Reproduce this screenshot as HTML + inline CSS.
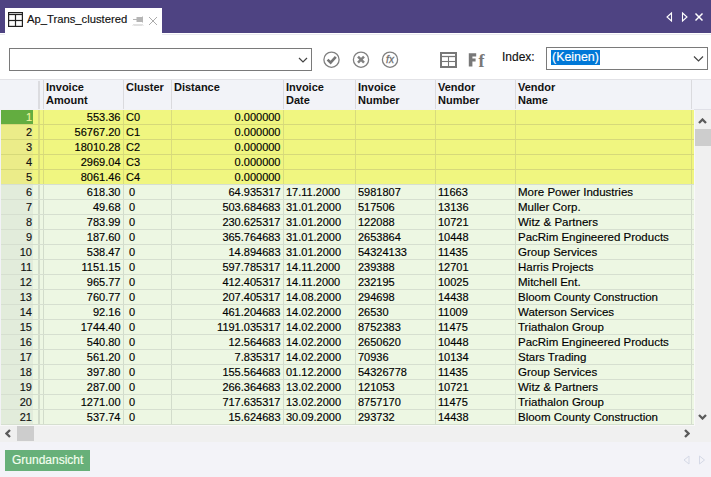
<!DOCTYPE html>
<html><head><meta charset="utf-8"><style>
*{margin:0;padding:0;box-sizing:border-box}
html,body{width:711px;height:477px;overflow:hidden;background:#fff;font-family:"Liberation Sans",sans-serif;font-size:11px;color:#000}
.a{position:absolute}
.t{position:absolute;white-space:nowrap;line-height:14px;-webkit-text-stroke:0.15px currentColor}
</style></head><body>

<div class="a" style="left:0;top:0;width:711px;height:33px;background:#4E4382"></div>
<div class="a" style="left:0;top:34px;width:711px;height:1px;background:#EAEAEE"></div>
<div class="a" style="left:5px;top:8px;width:157px;height:27px;background:#fff"></div>
<svg class="a" style="left:8px;top:12px" width="15" height="15" viewBox="0 0 15 15"><g fill="none" stroke="#222" stroke-width="1.2"><rect x="0.6" y="0.6" width="13.8" height="13.8"/><line x1="0" y1="2.5" x2="15" y2="2.5"/><line x1="0" y1="8.5" x2="15" y2="8.5"/><line x1="7.5" y1="2.5" x2="7.5" y2="15"/></g></svg>
<div class="t" style="left:27px;top:12px;color:#111;font-size:11.25px">Ap_Trans_clustered</div>
<svg class="a" style="left:132px;top:16px" width="13" height="11" viewBox="0 0 13 11"><g fill="none" stroke="#B5B5B5" stroke-width="1"><line x1="1" y1="3.5" x2="5" y2="3.5"/><rect x="5" y="1.5" width="5" height="4" fill="#B5B5B5"/><line x1="10.5" y1="0.5" x2="10.5" y2="6.5"/><path d="M1 9.5 l1 -1 l1 1 l1 -1 l1 1 l1 -1 l1 1 l1 -1 l1 1 l1 -1 l1 1" stroke-width="0.9"/></g></svg>
<svg class="a" style="left:149px;top:17px" width="8" height="8" viewBox="0 0 8 8"><g stroke="#ABABAB" stroke-width="1"><line x1="0" y1="0" x2="8" y2="8"/><line x1="8" y1="0" x2="0" y2="8"/></g></svg>
<svg class="a" style="left:664px;top:11px" width="44" height="12" viewBox="0 0 44 12"><g fill="none" stroke="#fff" stroke-width="1.1"><path d="M7.5 2 L3 6 L7.5 10 Z"/><path d="M18.5 2 L23 6 L18.5 10 Z"/></g><g stroke="#fff" stroke-width="1.5"><line x1="31.5" y1="2.5" x2="38.5" y2="9.5"/><line x1="38.5" y1="2.5" x2="31.5" y2="9.5"/></g></svg>
<div class="a" style="left:9px;top:48px;width:303px;height:23px;border:1px solid #7A7A7A;background:#fff"></div>
<svg class="a" style="left:298px;top:57px" width="10" height="7" viewBox="0 0 10 7"><path d="M1 1 L5 5 L9 1" fill="none" stroke="#444" stroke-width="1.2"/></svg>
<svg class="a" style="left:322px;top:51px" width="80" height="18" viewBox="0 0 80 18"><g fill="none" stroke="#808080" stroke-width="1.3"><circle cx="9.5" cy="8.7" r="7.6"/><circle cx="39" cy="8.7" r="7.6"/><circle cx="68" cy="8.7" r="7.6"/></g><path d="M5.6 8.6 L8.6 11.6 L13.8 5.8" fill="none" stroke="#757575" stroke-width="2.6"/><g stroke="#808080" stroke-width="2.4"><line x1="36" y1="5.7" x2="42" y2="11.7"/><line x1="42" y1="5.7" x2="36" y2="11.7"/></g><text x="68" y="12.3" text-anchor="middle" font-family="Liberation Sans" font-style="italic" font-size="10" fill="#707070" stroke="#707070" stroke-width="0.3">fx</text></svg>
<svg class="a" style="left:440px;top:52px" width="17" height="16" viewBox="0 0 17 16"><g fill="none" stroke="#777"><rect x="1" y="1" width="15" height="14" stroke-width="2"/><line x1="0" y1="4.5" x2="17" y2="4.5" stroke-width="1.3"/><line x1="0" y1="9.5" x2="17" y2="9.5" stroke-width="1.1"/><line x1="8.5" y1="4.5" x2="8.5" y2="16" stroke-width="1.1"/></g></svg>
<svg class="a" style="left:468px;top:52px" width="20" height="16" viewBox="0 0 20 16"><path d="M0.8 1.2 H8.2 V4.4 H4.4 V6.6 H7.6 V9.4 H4.4 V14.6 H0.8 Z" fill="#787878"/><text x="10.6" y="14.6" font-family="Liberation Serif" font-weight="bold" font-size="18" fill="#787878">f</text></svg>
<div class="t" style="left:502px;top:50px;color:#111;font-size:12px">Index:</div>
<div class="a" style="left:546px;top:47px;width:162px;height:23px;border:1px solid #7A7A7A;background:#fff"></div>
<div class="a" style="left:551px;top:50px;width:49px;height:15px;background:#0078D7"></div>
<div class="t" style="left:552px;top:50px;color:#fff;font-size:12.4px">(Keinen)</div>
<svg class="a" style="left:693px;top:55px" width="11" height="8" viewBox="0 0 11 8"><path d="M1 1.5 L5.5 6 L10 1.5" fill="none" stroke="#444" stroke-width="1.2"/></svg>
<div class="a" style="left:0;top:79px;width:711px;height:31px;background:#F2F3F8;border-top:1px solid #E2E2E6;border-bottom:1px solid #E0E0E8"></div>
<div class="a" style="left:38px;top:81px;width:2px;height:28px;background:#DCDCE0"></div>
<div class="a" style="left:43px;top:80px;width:1px;height:29px;background:#D8D8DC"></div>
<div class="a" style="left:123px;top:80px;width:1px;height:29px;background:#DADADE"></div>
<div class="t" style="left:46px;top:81px;font-weight:bold;line-height:13px;color:#111;-webkit-text-stroke:0">Invoice<br>Amount</div>
<div class="a" style="left:171px;top:80px;width:1px;height:29px;background:#DADADE"></div>
<div class="t" style="left:126px;top:81px;font-weight:bold;line-height:13px;color:#111;-webkit-text-stroke:0">Cluster<br></div>
<div class="a" style="left:283px;top:80px;width:1px;height:29px;background:#DADADE"></div>
<div class="t" style="left:174px;top:81px;font-weight:bold;line-height:13px;color:#111;-webkit-text-stroke:0">Distance<br></div>
<div class="a" style="left:355px;top:80px;width:1px;height:29px;background:#DADADE"></div>
<div class="t" style="left:286px;top:81px;font-weight:bold;line-height:13px;color:#111;-webkit-text-stroke:0">Invoice<br>Date</div>
<div class="a" style="left:435px;top:80px;width:1px;height:29px;background:#DADADE"></div>
<div class="t" style="left:358px;top:81px;font-weight:bold;line-height:13px;color:#111;-webkit-text-stroke:0">Invoice<br>Number</div>
<div class="a" style="left:515px;top:80px;width:1px;height:29px;background:#DADADE"></div>
<div class="t" style="left:438px;top:81px;font-weight:bold;line-height:13px;color:#111;-webkit-text-stroke:0">Vendor<br>Number</div>
<div class="a" style="left:691px;top:80px;width:1px;height:29px;background:#DADADE"></div>
<div class="t" style="left:518px;top:81px;font-weight:bold;line-height:13px;color:#111;-webkit-text-stroke:0">Vendor<br>Name</div>
<div class="a" style="left:0;top:109px;width:694px;height:316px;background:#F2F2F6"></div>
<div class="a" style="left:1px;top:110px;width:693px;height:14px;background:#F0F680"></div>
<div class="a" style="left:1px;top:110px;width:32px;height:14px;background:#63AD40"></div>
<div class="a" style="left:1px;top:124px;width:693px;height:1px;background:#D6D97A"></div>
<div class="a" style="left:38px;top:110px;width:2px;height:14px;background:#D9DC7C"></div>
<div class="a" style="left:43px;top:110px;width:1px;height:14px;background:#D9DC7C"></div>
<div class="a" style="left:123px;top:110px;width:1px;height:14px;background:#D9DC7C"></div>
<div class="a" style="left:171px;top:110px;width:1px;height:14px;background:#D9DC7C"></div>
<div class="a" style="left:283px;top:110px;width:1px;height:14px;background:#D9DC7C"></div>
<div class="a" style="left:355px;top:110px;width:1px;height:14px;background:#D9DC7C"></div>
<div class="a" style="left:435px;top:110px;width:1px;height:14px;background:#D9DC7C"></div>
<div class="a" style="left:515px;top:110px;width:1px;height:14px;background:#D9DC7C"></div>
<div class="a" style="left:691px;top:110px;width:1px;height:14px;background:#D9DC7C"></div>
<div class="t" style="left:1px;top:110px;width:31px;text-align:right;color:#EEF5A0">1</div>
<div class="t" style="left:44px;top:110px;width:76.5px;text-align:right">553.36</div>
<div class="t" style="left:126px;top:110px;">C0</div>
<div class="t" style="left:172px;top:110px;width:108.5px;text-align:right">0.000000</div>
<div class="t" style="left:286px;top:110px;"></div>
<div class="t" style="left:358px;top:110px;"></div>
<div class="t" style="left:438px;top:110px;"></div>
<div class="t" style="left:518px;top:110px;font-size:11.5px;"></div>
<div class="a" style="left:1px;top:125px;width:693px;height:14px;background:#F0F680"></div>
<div class="a" style="left:1px;top:125px;width:32px;height:14px;background:#EBEC89"></div>
<div class="a" style="left:1px;top:139px;width:693px;height:1px;background:#D6D97A"></div>
<div class="a" style="left:38px;top:125px;width:2px;height:14px;background:#D9DC7C"></div>
<div class="a" style="left:43px;top:125px;width:1px;height:14px;background:#D9DC7C"></div>
<div class="a" style="left:123px;top:125px;width:1px;height:14px;background:#D9DC7C"></div>
<div class="a" style="left:171px;top:125px;width:1px;height:14px;background:#D9DC7C"></div>
<div class="a" style="left:283px;top:125px;width:1px;height:14px;background:#D9DC7C"></div>
<div class="a" style="left:355px;top:125px;width:1px;height:14px;background:#D9DC7C"></div>
<div class="a" style="left:435px;top:125px;width:1px;height:14px;background:#D9DC7C"></div>
<div class="a" style="left:515px;top:125px;width:1px;height:14px;background:#D9DC7C"></div>
<div class="a" style="left:691px;top:125px;width:1px;height:14px;background:#D9DC7C"></div>
<div class="t" style="left:1px;top:125px;width:31px;text-align:right;color:#111">2</div>
<div class="t" style="left:44px;top:125px;width:76.5px;text-align:right">56767.20</div>
<div class="t" style="left:126px;top:125px;">C1</div>
<div class="t" style="left:172px;top:125px;width:108.5px;text-align:right">0.000000</div>
<div class="t" style="left:286px;top:125px;"></div>
<div class="t" style="left:358px;top:125px;"></div>
<div class="t" style="left:438px;top:125px;"></div>
<div class="t" style="left:518px;top:125px;font-size:11.5px;"></div>
<div class="a" style="left:1px;top:140px;width:693px;height:14px;background:#F0F680"></div>
<div class="a" style="left:1px;top:140px;width:32px;height:14px;background:#EBEC89"></div>
<div class="a" style="left:1px;top:154px;width:693px;height:1px;background:#D6D97A"></div>
<div class="a" style="left:38px;top:140px;width:2px;height:14px;background:#D9DC7C"></div>
<div class="a" style="left:43px;top:140px;width:1px;height:14px;background:#D9DC7C"></div>
<div class="a" style="left:123px;top:140px;width:1px;height:14px;background:#D9DC7C"></div>
<div class="a" style="left:171px;top:140px;width:1px;height:14px;background:#D9DC7C"></div>
<div class="a" style="left:283px;top:140px;width:1px;height:14px;background:#D9DC7C"></div>
<div class="a" style="left:355px;top:140px;width:1px;height:14px;background:#D9DC7C"></div>
<div class="a" style="left:435px;top:140px;width:1px;height:14px;background:#D9DC7C"></div>
<div class="a" style="left:515px;top:140px;width:1px;height:14px;background:#D9DC7C"></div>
<div class="a" style="left:691px;top:140px;width:1px;height:14px;background:#D9DC7C"></div>
<div class="t" style="left:1px;top:140px;width:31px;text-align:right;color:#111">3</div>
<div class="t" style="left:44px;top:140px;width:76.5px;text-align:right">18010.28</div>
<div class="t" style="left:126px;top:140px;">C2</div>
<div class="t" style="left:172px;top:140px;width:108.5px;text-align:right">0.000000</div>
<div class="t" style="left:286px;top:140px;"></div>
<div class="t" style="left:358px;top:140px;"></div>
<div class="t" style="left:438px;top:140px;"></div>
<div class="t" style="left:518px;top:140px;font-size:11.5px;"></div>
<div class="a" style="left:1px;top:155px;width:693px;height:14px;background:#F0F680"></div>
<div class="a" style="left:1px;top:155px;width:32px;height:14px;background:#EBEC89"></div>
<div class="a" style="left:1px;top:169px;width:693px;height:1px;background:#D6D97A"></div>
<div class="a" style="left:38px;top:155px;width:2px;height:14px;background:#D9DC7C"></div>
<div class="a" style="left:43px;top:155px;width:1px;height:14px;background:#D9DC7C"></div>
<div class="a" style="left:123px;top:155px;width:1px;height:14px;background:#D9DC7C"></div>
<div class="a" style="left:171px;top:155px;width:1px;height:14px;background:#D9DC7C"></div>
<div class="a" style="left:283px;top:155px;width:1px;height:14px;background:#D9DC7C"></div>
<div class="a" style="left:355px;top:155px;width:1px;height:14px;background:#D9DC7C"></div>
<div class="a" style="left:435px;top:155px;width:1px;height:14px;background:#D9DC7C"></div>
<div class="a" style="left:515px;top:155px;width:1px;height:14px;background:#D9DC7C"></div>
<div class="a" style="left:691px;top:155px;width:1px;height:14px;background:#D9DC7C"></div>
<div class="t" style="left:1px;top:155px;width:31px;text-align:right;color:#111">4</div>
<div class="t" style="left:44px;top:155px;width:76.5px;text-align:right">2969.04</div>
<div class="t" style="left:126px;top:155px;">C3</div>
<div class="t" style="left:172px;top:155px;width:108.5px;text-align:right">0.000000</div>
<div class="t" style="left:286px;top:155px;"></div>
<div class="t" style="left:358px;top:155px;"></div>
<div class="t" style="left:438px;top:155px;"></div>
<div class="t" style="left:518px;top:155px;font-size:11.5px;"></div>
<div class="a" style="left:1px;top:170px;width:693px;height:14px;background:#F0F680"></div>
<div class="a" style="left:1px;top:170px;width:32px;height:14px;background:#EBEC89"></div>
<div class="a" style="left:1px;top:184px;width:693px;height:1px;background:#D6DFD0"></div>
<div class="a" style="left:38px;top:170px;width:2px;height:14px;background:#D9DC7C"></div>
<div class="a" style="left:43px;top:170px;width:1px;height:14px;background:#D9DC7C"></div>
<div class="a" style="left:123px;top:170px;width:1px;height:14px;background:#D9DC7C"></div>
<div class="a" style="left:171px;top:170px;width:1px;height:14px;background:#D9DC7C"></div>
<div class="a" style="left:283px;top:170px;width:1px;height:14px;background:#D9DC7C"></div>
<div class="a" style="left:355px;top:170px;width:1px;height:14px;background:#D9DC7C"></div>
<div class="a" style="left:435px;top:170px;width:1px;height:14px;background:#D9DC7C"></div>
<div class="a" style="left:515px;top:170px;width:1px;height:14px;background:#D9DC7C"></div>
<div class="a" style="left:691px;top:170px;width:1px;height:14px;background:#D9DC7C"></div>
<div class="t" style="left:1px;top:170px;width:31px;text-align:right;color:#111">5</div>
<div class="t" style="left:44px;top:170px;width:76.5px;text-align:right">8061.46</div>
<div class="t" style="left:126px;top:170px;">C4</div>
<div class="t" style="left:172px;top:170px;width:108.5px;text-align:right">0.000000</div>
<div class="t" style="left:286px;top:170px;"></div>
<div class="t" style="left:358px;top:170px;"></div>
<div class="t" style="left:438px;top:170px;"></div>
<div class="t" style="left:518px;top:170px;font-size:11.5px;"></div>
<div class="a" style="left:1px;top:185px;width:693px;height:14px;background:#EDF7E3"></div>
<div class="a" style="left:1px;top:185px;width:32px;height:14px;background:#E2ECDB"></div>
<div class="a" style="left:1px;top:199px;width:693px;height:1px;background:#D6DFD0"></div>
<div class="a" style="left:38px;top:185px;width:2px;height:14px;background:#D2DCCB"></div>
<div class="a" style="left:43px;top:185px;width:1px;height:14px;background:#D2DCCB"></div>
<div class="a" style="left:123px;top:185px;width:1px;height:14px;background:#D2DCCB"></div>
<div class="a" style="left:171px;top:185px;width:1px;height:14px;background:#D2DCCB"></div>
<div class="a" style="left:283px;top:185px;width:1px;height:14px;background:#D2DCCB"></div>
<div class="a" style="left:355px;top:185px;width:1px;height:14px;background:#D2DCCB"></div>
<div class="a" style="left:435px;top:185px;width:1px;height:14px;background:#D2DCCB"></div>
<div class="a" style="left:515px;top:185px;width:1px;height:14px;background:#D2DCCB"></div>
<div class="a" style="left:691px;top:185px;width:1px;height:14px;background:#D2DCCB"></div>
<div class="t" style="left:1px;top:185px;width:31px;text-align:right;color:#111">6</div>
<div class="t" style="left:44px;top:185px;width:76.5px;text-align:right">618.30</div>
<div class="t" style="left:129px;top:185px;">0</div>
<div class="t" style="left:172px;top:185px;width:108.5px;text-align:right">64.935317</div>
<div class="t" style="left:286px;top:185px;">17.11.2000</div>
<div class="t" style="left:358px;top:185px;">5981807</div>
<div class="t" style="left:438px;top:185px;">11663</div>
<div class="t" style="left:518px;top:185px;font-size:11.5px;">More Power Industries</div>
<div class="a" style="left:1px;top:200px;width:693px;height:14px;background:#EDF7E3"></div>
<div class="a" style="left:1px;top:200px;width:32px;height:14px;background:#E2ECDB"></div>
<div class="a" style="left:1px;top:214px;width:693px;height:1px;background:#D6DFD0"></div>
<div class="a" style="left:38px;top:200px;width:2px;height:14px;background:#D2DCCB"></div>
<div class="a" style="left:43px;top:200px;width:1px;height:14px;background:#D2DCCB"></div>
<div class="a" style="left:123px;top:200px;width:1px;height:14px;background:#D2DCCB"></div>
<div class="a" style="left:171px;top:200px;width:1px;height:14px;background:#D2DCCB"></div>
<div class="a" style="left:283px;top:200px;width:1px;height:14px;background:#D2DCCB"></div>
<div class="a" style="left:355px;top:200px;width:1px;height:14px;background:#D2DCCB"></div>
<div class="a" style="left:435px;top:200px;width:1px;height:14px;background:#D2DCCB"></div>
<div class="a" style="left:515px;top:200px;width:1px;height:14px;background:#D2DCCB"></div>
<div class="a" style="left:691px;top:200px;width:1px;height:14px;background:#D2DCCB"></div>
<div class="t" style="left:1px;top:200px;width:31px;text-align:right;color:#111">7</div>
<div class="t" style="left:44px;top:200px;width:76.5px;text-align:right">49.68</div>
<div class="t" style="left:129px;top:200px;">0</div>
<div class="t" style="left:172px;top:200px;width:108.5px;text-align:right">503.684683</div>
<div class="t" style="left:286px;top:200px;">31.01.2000</div>
<div class="t" style="left:358px;top:200px;">517506</div>
<div class="t" style="left:438px;top:200px;">13136</div>
<div class="t" style="left:518px;top:200px;font-size:11.5px;">Muller Corp.</div>
<div class="a" style="left:1px;top:215px;width:693px;height:14px;background:#EDF7E3"></div>
<div class="a" style="left:1px;top:215px;width:32px;height:14px;background:#E2ECDB"></div>
<div class="a" style="left:1px;top:229px;width:693px;height:1px;background:#D6DFD0"></div>
<div class="a" style="left:38px;top:215px;width:2px;height:14px;background:#D2DCCB"></div>
<div class="a" style="left:43px;top:215px;width:1px;height:14px;background:#D2DCCB"></div>
<div class="a" style="left:123px;top:215px;width:1px;height:14px;background:#D2DCCB"></div>
<div class="a" style="left:171px;top:215px;width:1px;height:14px;background:#D2DCCB"></div>
<div class="a" style="left:283px;top:215px;width:1px;height:14px;background:#D2DCCB"></div>
<div class="a" style="left:355px;top:215px;width:1px;height:14px;background:#D2DCCB"></div>
<div class="a" style="left:435px;top:215px;width:1px;height:14px;background:#D2DCCB"></div>
<div class="a" style="left:515px;top:215px;width:1px;height:14px;background:#D2DCCB"></div>
<div class="a" style="left:691px;top:215px;width:1px;height:14px;background:#D2DCCB"></div>
<div class="t" style="left:1px;top:215px;width:31px;text-align:right;color:#111">8</div>
<div class="t" style="left:44px;top:215px;width:76.5px;text-align:right">783.99</div>
<div class="t" style="left:129px;top:215px;">0</div>
<div class="t" style="left:172px;top:215px;width:108.5px;text-align:right">230.625317</div>
<div class="t" style="left:286px;top:215px;">31.01.2000</div>
<div class="t" style="left:358px;top:215px;">122088</div>
<div class="t" style="left:438px;top:215px;">10721</div>
<div class="t" style="left:518px;top:215px;font-size:11.5px;">Witz &amp; Partners</div>
<div class="a" style="left:1px;top:230px;width:693px;height:14px;background:#EDF7E3"></div>
<div class="a" style="left:1px;top:230px;width:32px;height:14px;background:#E2ECDB"></div>
<div class="a" style="left:1px;top:244px;width:693px;height:1px;background:#D6DFD0"></div>
<div class="a" style="left:38px;top:230px;width:2px;height:14px;background:#D2DCCB"></div>
<div class="a" style="left:43px;top:230px;width:1px;height:14px;background:#D2DCCB"></div>
<div class="a" style="left:123px;top:230px;width:1px;height:14px;background:#D2DCCB"></div>
<div class="a" style="left:171px;top:230px;width:1px;height:14px;background:#D2DCCB"></div>
<div class="a" style="left:283px;top:230px;width:1px;height:14px;background:#D2DCCB"></div>
<div class="a" style="left:355px;top:230px;width:1px;height:14px;background:#D2DCCB"></div>
<div class="a" style="left:435px;top:230px;width:1px;height:14px;background:#D2DCCB"></div>
<div class="a" style="left:515px;top:230px;width:1px;height:14px;background:#D2DCCB"></div>
<div class="a" style="left:691px;top:230px;width:1px;height:14px;background:#D2DCCB"></div>
<div class="t" style="left:1px;top:230px;width:31px;text-align:right;color:#111">9</div>
<div class="t" style="left:44px;top:230px;width:76.5px;text-align:right">187.60</div>
<div class="t" style="left:129px;top:230px;">0</div>
<div class="t" style="left:172px;top:230px;width:108.5px;text-align:right">365.764683</div>
<div class="t" style="left:286px;top:230px;">31.01.2000</div>
<div class="t" style="left:358px;top:230px;">2653864</div>
<div class="t" style="left:438px;top:230px;">10448</div>
<div class="t" style="left:518px;top:230px;font-size:11.5px;">PacRim Engineered Products</div>
<div class="a" style="left:1px;top:245px;width:693px;height:14px;background:#EDF7E3"></div>
<div class="a" style="left:1px;top:245px;width:32px;height:14px;background:#E2ECDB"></div>
<div class="a" style="left:1px;top:259px;width:693px;height:1px;background:#D6DFD0"></div>
<div class="a" style="left:38px;top:245px;width:2px;height:14px;background:#D2DCCB"></div>
<div class="a" style="left:43px;top:245px;width:1px;height:14px;background:#D2DCCB"></div>
<div class="a" style="left:123px;top:245px;width:1px;height:14px;background:#D2DCCB"></div>
<div class="a" style="left:171px;top:245px;width:1px;height:14px;background:#D2DCCB"></div>
<div class="a" style="left:283px;top:245px;width:1px;height:14px;background:#D2DCCB"></div>
<div class="a" style="left:355px;top:245px;width:1px;height:14px;background:#D2DCCB"></div>
<div class="a" style="left:435px;top:245px;width:1px;height:14px;background:#D2DCCB"></div>
<div class="a" style="left:515px;top:245px;width:1px;height:14px;background:#D2DCCB"></div>
<div class="a" style="left:691px;top:245px;width:1px;height:14px;background:#D2DCCB"></div>
<div class="t" style="left:1px;top:245px;width:31px;text-align:right;color:#111">10</div>
<div class="t" style="left:44px;top:245px;width:76.5px;text-align:right">538.47</div>
<div class="t" style="left:129px;top:245px;">0</div>
<div class="t" style="left:172px;top:245px;width:108.5px;text-align:right">14.894683</div>
<div class="t" style="left:286px;top:245px;">31.01.2000</div>
<div class="t" style="left:358px;top:245px;">54324133</div>
<div class="t" style="left:438px;top:245px;">11435</div>
<div class="t" style="left:518px;top:245px;font-size:11.5px;">Group Services</div>
<div class="a" style="left:1px;top:260px;width:693px;height:14px;background:#EDF7E3"></div>
<div class="a" style="left:1px;top:260px;width:32px;height:14px;background:#E2ECDB"></div>
<div class="a" style="left:1px;top:274px;width:693px;height:1px;background:#D6DFD0"></div>
<div class="a" style="left:38px;top:260px;width:2px;height:14px;background:#D2DCCB"></div>
<div class="a" style="left:43px;top:260px;width:1px;height:14px;background:#D2DCCB"></div>
<div class="a" style="left:123px;top:260px;width:1px;height:14px;background:#D2DCCB"></div>
<div class="a" style="left:171px;top:260px;width:1px;height:14px;background:#D2DCCB"></div>
<div class="a" style="left:283px;top:260px;width:1px;height:14px;background:#D2DCCB"></div>
<div class="a" style="left:355px;top:260px;width:1px;height:14px;background:#D2DCCB"></div>
<div class="a" style="left:435px;top:260px;width:1px;height:14px;background:#D2DCCB"></div>
<div class="a" style="left:515px;top:260px;width:1px;height:14px;background:#D2DCCB"></div>
<div class="a" style="left:691px;top:260px;width:1px;height:14px;background:#D2DCCB"></div>
<div class="t" style="left:1px;top:260px;width:31px;text-align:right;color:#111">11</div>
<div class="t" style="left:44px;top:260px;width:76.5px;text-align:right">1151.15</div>
<div class="t" style="left:129px;top:260px;">0</div>
<div class="t" style="left:172px;top:260px;width:108.5px;text-align:right">597.785317</div>
<div class="t" style="left:286px;top:260px;">14.11.2000</div>
<div class="t" style="left:358px;top:260px;">239388</div>
<div class="t" style="left:438px;top:260px;">12701</div>
<div class="t" style="left:518px;top:260px;font-size:11.5px;">Harris Projects</div>
<div class="a" style="left:1px;top:275px;width:693px;height:14px;background:#EDF7E3"></div>
<div class="a" style="left:1px;top:275px;width:32px;height:14px;background:#E2ECDB"></div>
<div class="a" style="left:1px;top:289px;width:693px;height:1px;background:#D6DFD0"></div>
<div class="a" style="left:38px;top:275px;width:2px;height:14px;background:#D2DCCB"></div>
<div class="a" style="left:43px;top:275px;width:1px;height:14px;background:#D2DCCB"></div>
<div class="a" style="left:123px;top:275px;width:1px;height:14px;background:#D2DCCB"></div>
<div class="a" style="left:171px;top:275px;width:1px;height:14px;background:#D2DCCB"></div>
<div class="a" style="left:283px;top:275px;width:1px;height:14px;background:#D2DCCB"></div>
<div class="a" style="left:355px;top:275px;width:1px;height:14px;background:#D2DCCB"></div>
<div class="a" style="left:435px;top:275px;width:1px;height:14px;background:#D2DCCB"></div>
<div class="a" style="left:515px;top:275px;width:1px;height:14px;background:#D2DCCB"></div>
<div class="a" style="left:691px;top:275px;width:1px;height:14px;background:#D2DCCB"></div>
<div class="t" style="left:1px;top:275px;width:31px;text-align:right;color:#111">12</div>
<div class="t" style="left:44px;top:275px;width:76.5px;text-align:right">965.77</div>
<div class="t" style="left:129px;top:275px;">0</div>
<div class="t" style="left:172px;top:275px;width:108.5px;text-align:right">412.405317</div>
<div class="t" style="left:286px;top:275px;">14.11.2000</div>
<div class="t" style="left:358px;top:275px;">232195</div>
<div class="t" style="left:438px;top:275px;">10025</div>
<div class="t" style="left:518px;top:275px;font-size:11.5px;">Mitchell Ent.</div>
<div class="a" style="left:1px;top:290px;width:693px;height:14px;background:#EDF7E3"></div>
<div class="a" style="left:1px;top:290px;width:32px;height:14px;background:#E2ECDB"></div>
<div class="a" style="left:1px;top:304px;width:693px;height:1px;background:#D6DFD0"></div>
<div class="a" style="left:38px;top:290px;width:2px;height:14px;background:#D2DCCB"></div>
<div class="a" style="left:43px;top:290px;width:1px;height:14px;background:#D2DCCB"></div>
<div class="a" style="left:123px;top:290px;width:1px;height:14px;background:#D2DCCB"></div>
<div class="a" style="left:171px;top:290px;width:1px;height:14px;background:#D2DCCB"></div>
<div class="a" style="left:283px;top:290px;width:1px;height:14px;background:#D2DCCB"></div>
<div class="a" style="left:355px;top:290px;width:1px;height:14px;background:#D2DCCB"></div>
<div class="a" style="left:435px;top:290px;width:1px;height:14px;background:#D2DCCB"></div>
<div class="a" style="left:515px;top:290px;width:1px;height:14px;background:#D2DCCB"></div>
<div class="a" style="left:691px;top:290px;width:1px;height:14px;background:#D2DCCB"></div>
<div class="t" style="left:1px;top:290px;width:31px;text-align:right;color:#111">13</div>
<div class="t" style="left:44px;top:290px;width:76.5px;text-align:right">760.77</div>
<div class="t" style="left:129px;top:290px;">0</div>
<div class="t" style="left:172px;top:290px;width:108.5px;text-align:right">207.405317</div>
<div class="t" style="left:286px;top:290px;">14.08.2000</div>
<div class="t" style="left:358px;top:290px;">294698</div>
<div class="t" style="left:438px;top:290px;">14438</div>
<div class="t" style="left:518px;top:290px;font-size:11.5px;">Bloom County Construction</div>
<div class="a" style="left:1px;top:305px;width:693px;height:14px;background:#EDF7E3"></div>
<div class="a" style="left:1px;top:305px;width:32px;height:14px;background:#E2ECDB"></div>
<div class="a" style="left:1px;top:319px;width:693px;height:1px;background:#D6DFD0"></div>
<div class="a" style="left:38px;top:305px;width:2px;height:14px;background:#D2DCCB"></div>
<div class="a" style="left:43px;top:305px;width:1px;height:14px;background:#D2DCCB"></div>
<div class="a" style="left:123px;top:305px;width:1px;height:14px;background:#D2DCCB"></div>
<div class="a" style="left:171px;top:305px;width:1px;height:14px;background:#D2DCCB"></div>
<div class="a" style="left:283px;top:305px;width:1px;height:14px;background:#D2DCCB"></div>
<div class="a" style="left:355px;top:305px;width:1px;height:14px;background:#D2DCCB"></div>
<div class="a" style="left:435px;top:305px;width:1px;height:14px;background:#D2DCCB"></div>
<div class="a" style="left:515px;top:305px;width:1px;height:14px;background:#D2DCCB"></div>
<div class="a" style="left:691px;top:305px;width:1px;height:14px;background:#D2DCCB"></div>
<div class="t" style="left:1px;top:305px;width:31px;text-align:right;color:#111">14</div>
<div class="t" style="left:44px;top:305px;width:76.5px;text-align:right">92.16</div>
<div class="t" style="left:129px;top:305px;">0</div>
<div class="t" style="left:172px;top:305px;width:108.5px;text-align:right">461.204683</div>
<div class="t" style="left:286px;top:305px;">14.02.2000</div>
<div class="t" style="left:358px;top:305px;">26530</div>
<div class="t" style="left:438px;top:305px;">11009</div>
<div class="t" style="left:518px;top:305px;font-size:11.5px;">Waterson Services</div>
<div class="a" style="left:1px;top:320px;width:693px;height:14px;background:#EDF7E3"></div>
<div class="a" style="left:1px;top:320px;width:32px;height:14px;background:#E2ECDB"></div>
<div class="a" style="left:1px;top:334px;width:693px;height:1px;background:#D6DFD0"></div>
<div class="a" style="left:38px;top:320px;width:2px;height:14px;background:#D2DCCB"></div>
<div class="a" style="left:43px;top:320px;width:1px;height:14px;background:#D2DCCB"></div>
<div class="a" style="left:123px;top:320px;width:1px;height:14px;background:#D2DCCB"></div>
<div class="a" style="left:171px;top:320px;width:1px;height:14px;background:#D2DCCB"></div>
<div class="a" style="left:283px;top:320px;width:1px;height:14px;background:#D2DCCB"></div>
<div class="a" style="left:355px;top:320px;width:1px;height:14px;background:#D2DCCB"></div>
<div class="a" style="left:435px;top:320px;width:1px;height:14px;background:#D2DCCB"></div>
<div class="a" style="left:515px;top:320px;width:1px;height:14px;background:#D2DCCB"></div>
<div class="a" style="left:691px;top:320px;width:1px;height:14px;background:#D2DCCB"></div>
<div class="t" style="left:1px;top:320px;width:31px;text-align:right;color:#111">15</div>
<div class="t" style="left:44px;top:320px;width:76.5px;text-align:right">1744.40</div>
<div class="t" style="left:129px;top:320px;">0</div>
<div class="t" style="left:172px;top:320px;width:108.5px;text-align:right">1191.035317</div>
<div class="t" style="left:286px;top:320px;">14.02.2000</div>
<div class="t" style="left:358px;top:320px;">8752383</div>
<div class="t" style="left:438px;top:320px;">11475</div>
<div class="t" style="left:518px;top:320px;font-size:11.5px;">Triathalon Group</div>
<div class="a" style="left:1px;top:335px;width:693px;height:14px;background:#EDF7E3"></div>
<div class="a" style="left:1px;top:335px;width:32px;height:14px;background:#E2ECDB"></div>
<div class="a" style="left:1px;top:349px;width:693px;height:1px;background:#D6DFD0"></div>
<div class="a" style="left:38px;top:335px;width:2px;height:14px;background:#D2DCCB"></div>
<div class="a" style="left:43px;top:335px;width:1px;height:14px;background:#D2DCCB"></div>
<div class="a" style="left:123px;top:335px;width:1px;height:14px;background:#D2DCCB"></div>
<div class="a" style="left:171px;top:335px;width:1px;height:14px;background:#D2DCCB"></div>
<div class="a" style="left:283px;top:335px;width:1px;height:14px;background:#D2DCCB"></div>
<div class="a" style="left:355px;top:335px;width:1px;height:14px;background:#D2DCCB"></div>
<div class="a" style="left:435px;top:335px;width:1px;height:14px;background:#D2DCCB"></div>
<div class="a" style="left:515px;top:335px;width:1px;height:14px;background:#D2DCCB"></div>
<div class="a" style="left:691px;top:335px;width:1px;height:14px;background:#D2DCCB"></div>
<div class="t" style="left:1px;top:335px;width:31px;text-align:right;color:#111">16</div>
<div class="t" style="left:44px;top:335px;width:76.5px;text-align:right">540.80</div>
<div class="t" style="left:129px;top:335px;">0</div>
<div class="t" style="left:172px;top:335px;width:108.5px;text-align:right">12.564683</div>
<div class="t" style="left:286px;top:335px;">14.02.2000</div>
<div class="t" style="left:358px;top:335px;">2650620</div>
<div class="t" style="left:438px;top:335px;">10448</div>
<div class="t" style="left:518px;top:335px;font-size:11.5px;">PacRim Engineered Products</div>
<div class="a" style="left:1px;top:350px;width:693px;height:14px;background:#EDF7E3"></div>
<div class="a" style="left:1px;top:350px;width:32px;height:14px;background:#E2ECDB"></div>
<div class="a" style="left:1px;top:364px;width:693px;height:1px;background:#D6DFD0"></div>
<div class="a" style="left:38px;top:350px;width:2px;height:14px;background:#D2DCCB"></div>
<div class="a" style="left:43px;top:350px;width:1px;height:14px;background:#D2DCCB"></div>
<div class="a" style="left:123px;top:350px;width:1px;height:14px;background:#D2DCCB"></div>
<div class="a" style="left:171px;top:350px;width:1px;height:14px;background:#D2DCCB"></div>
<div class="a" style="left:283px;top:350px;width:1px;height:14px;background:#D2DCCB"></div>
<div class="a" style="left:355px;top:350px;width:1px;height:14px;background:#D2DCCB"></div>
<div class="a" style="left:435px;top:350px;width:1px;height:14px;background:#D2DCCB"></div>
<div class="a" style="left:515px;top:350px;width:1px;height:14px;background:#D2DCCB"></div>
<div class="a" style="left:691px;top:350px;width:1px;height:14px;background:#D2DCCB"></div>
<div class="t" style="left:1px;top:350px;width:31px;text-align:right;color:#111">17</div>
<div class="t" style="left:44px;top:350px;width:76.5px;text-align:right">561.20</div>
<div class="t" style="left:129px;top:350px;">0</div>
<div class="t" style="left:172px;top:350px;width:108.5px;text-align:right">7.835317</div>
<div class="t" style="left:286px;top:350px;">14.02.2000</div>
<div class="t" style="left:358px;top:350px;">70936</div>
<div class="t" style="left:438px;top:350px;">10134</div>
<div class="t" style="left:518px;top:350px;font-size:11.5px;">Stars Trading</div>
<div class="a" style="left:1px;top:365px;width:693px;height:14px;background:#EDF7E3"></div>
<div class="a" style="left:1px;top:365px;width:32px;height:14px;background:#E2ECDB"></div>
<div class="a" style="left:1px;top:379px;width:693px;height:1px;background:#D6DFD0"></div>
<div class="a" style="left:38px;top:365px;width:2px;height:14px;background:#D2DCCB"></div>
<div class="a" style="left:43px;top:365px;width:1px;height:14px;background:#D2DCCB"></div>
<div class="a" style="left:123px;top:365px;width:1px;height:14px;background:#D2DCCB"></div>
<div class="a" style="left:171px;top:365px;width:1px;height:14px;background:#D2DCCB"></div>
<div class="a" style="left:283px;top:365px;width:1px;height:14px;background:#D2DCCB"></div>
<div class="a" style="left:355px;top:365px;width:1px;height:14px;background:#D2DCCB"></div>
<div class="a" style="left:435px;top:365px;width:1px;height:14px;background:#D2DCCB"></div>
<div class="a" style="left:515px;top:365px;width:1px;height:14px;background:#D2DCCB"></div>
<div class="a" style="left:691px;top:365px;width:1px;height:14px;background:#D2DCCB"></div>
<div class="t" style="left:1px;top:365px;width:31px;text-align:right;color:#111">18</div>
<div class="t" style="left:44px;top:365px;width:76.5px;text-align:right">397.80</div>
<div class="t" style="left:129px;top:365px;">0</div>
<div class="t" style="left:172px;top:365px;width:108.5px;text-align:right">155.564683</div>
<div class="t" style="left:286px;top:365px;">01.12.2000</div>
<div class="t" style="left:358px;top:365px;">54326778</div>
<div class="t" style="left:438px;top:365px;">11435</div>
<div class="t" style="left:518px;top:365px;font-size:11.5px;">Group Services</div>
<div class="a" style="left:1px;top:380px;width:693px;height:14px;background:#EDF7E3"></div>
<div class="a" style="left:1px;top:380px;width:32px;height:14px;background:#E2ECDB"></div>
<div class="a" style="left:1px;top:394px;width:693px;height:1px;background:#D6DFD0"></div>
<div class="a" style="left:38px;top:380px;width:2px;height:14px;background:#D2DCCB"></div>
<div class="a" style="left:43px;top:380px;width:1px;height:14px;background:#D2DCCB"></div>
<div class="a" style="left:123px;top:380px;width:1px;height:14px;background:#D2DCCB"></div>
<div class="a" style="left:171px;top:380px;width:1px;height:14px;background:#D2DCCB"></div>
<div class="a" style="left:283px;top:380px;width:1px;height:14px;background:#D2DCCB"></div>
<div class="a" style="left:355px;top:380px;width:1px;height:14px;background:#D2DCCB"></div>
<div class="a" style="left:435px;top:380px;width:1px;height:14px;background:#D2DCCB"></div>
<div class="a" style="left:515px;top:380px;width:1px;height:14px;background:#D2DCCB"></div>
<div class="a" style="left:691px;top:380px;width:1px;height:14px;background:#D2DCCB"></div>
<div class="t" style="left:1px;top:380px;width:31px;text-align:right;color:#111">19</div>
<div class="t" style="left:44px;top:380px;width:76.5px;text-align:right">287.00</div>
<div class="t" style="left:129px;top:380px;">0</div>
<div class="t" style="left:172px;top:380px;width:108.5px;text-align:right">266.364683</div>
<div class="t" style="left:286px;top:380px;">13.02.2000</div>
<div class="t" style="left:358px;top:380px;">121053</div>
<div class="t" style="left:438px;top:380px;">10721</div>
<div class="t" style="left:518px;top:380px;font-size:11.5px;">Witz &amp; Partners</div>
<div class="a" style="left:1px;top:395px;width:693px;height:14px;background:#EDF7E3"></div>
<div class="a" style="left:1px;top:395px;width:32px;height:14px;background:#E2ECDB"></div>
<div class="a" style="left:1px;top:409px;width:693px;height:1px;background:#D6DFD0"></div>
<div class="a" style="left:38px;top:395px;width:2px;height:14px;background:#D2DCCB"></div>
<div class="a" style="left:43px;top:395px;width:1px;height:14px;background:#D2DCCB"></div>
<div class="a" style="left:123px;top:395px;width:1px;height:14px;background:#D2DCCB"></div>
<div class="a" style="left:171px;top:395px;width:1px;height:14px;background:#D2DCCB"></div>
<div class="a" style="left:283px;top:395px;width:1px;height:14px;background:#D2DCCB"></div>
<div class="a" style="left:355px;top:395px;width:1px;height:14px;background:#D2DCCB"></div>
<div class="a" style="left:435px;top:395px;width:1px;height:14px;background:#D2DCCB"></div>
<div class="a" style="left:515px;top:395px;width:1px;height:14px;background:#D2DCCB"></div>
<div class="a" style="left:691px;top:395px;width:1px;height:14px;background:#D2DCCB"></div>
<div class="t" style="left:1px;top:395px;width:31px;text-align:right;color:#111">20</div>
<div class="t" style="left:44px;top:395px;width:76.5px;text-align:right">1271.00</div>
<div class="t" style="left:129px;top:395px;">0</div>
<div class="t" style="left:172px;top:395px;width:108.5px;text-align:right">717.635317</div>
<div class="t" style="left:286px;top:395px;">13.02.2000</div>
<div class="t" style="left:358px;top:395px;">8757170</div>
<div class="t" style="left:438px;top:395px;">11475</div>
<div class="t" style="left:518px;top:395px;font-size:11.5px;">Triathalon Group</div>
<div class="a" style="left:1px;top:410px;width:693px;height:14px;background:#EDF7E3"></div>
<div class="a" style="left:1px;top:410px;width:32px;height:14px;background:#E2ECDB"></div>
<div class="a" style="left:1px;top:424px;width:693px;height:1px;background:#D6DFD0"></div>
<div class="a" style="left:38px;top:410px;width:2px;height:14px;background:#D2DCCB"></div>
<div class="a" style="left:43px;top:410px;width:1px;height:14px;background:#D2DCCB"></div>
<div class="a" style="left:123px;top:410px;width:1px;height:14px;background:#D2DCCB"></div>
<div class="a" style="left:171px;top:410px;width:1px;height:14px;background:#D2DCCB"></div>
<div class="a" style="left:283px;top:410px;width:1px;height:14px;background:#D2DCCB"></div>
<div class="a" style="left:355px;top:410px;width:1px;height:14px;background:#D2DCCB"></div>
<div class="a" style="left:435px;top:410px;width:1px;height:14px;background:#D2DCCB"></div>
<div class="a" style="left:515px;top:410px;width:1px;height:14px;background:#D2DCCB"></div>
<div class="a" style="left:691px;top:410px;width:1px;height:14px;background:#D2DCCB"></div>
<div class="t" style="left:1px;top:410px;width:31px;text-align:right;color:#111">21</div>
<div class="t" style="left:44px;top:410px;width:76.5px;text-align:right">537.74</div>
<div class="t" style="left:129px;top:410px;">0</div>
<div class="t" style="left:172px;top:410px;width:108.5px;text-align:right">15.624683</div>
<div class="t" style="left:286px;top:410px;">30.09.2000</div>
<div class="t" style="left:358px;top:410px;">293732</div>
<div class="t" style="left:438px;top:410px;">14438</div>
<div class="t" style="left:518px;top:410px;font-size:11.5px;">Bloom County Construction</div>
<div class="a" style="left:694px;top:110px;width:17px;height:332px;background:#F0F0F0"></div>
<div class="a" style="left:694px;top:110px;width:1px;height:315px;background:#F8F8F8"></div>
<svg class="a" style="left:698px;top:117.5px" width="9" height="6" viewBox="0 0 9 6"><path d="M1 5 L4.5 1.5 L8 5" fill="none" stroke="#5A5A5A" stroke-width="2.3"/></svg>
<div class="a" style="left:695px;top:129px;width:16px;height:17px;background:#CDCDCD"></div>
<svg class="a" style="left:698px;top:414px" width="9" height="6" viewBox="0 0 9 6"><path d="M1 1 L4.5 4.5 L8 1" fill="none" stroke="#5A5A5A" stroke-width="2.3"/></svg>
<div class="a" style="left:0;top:425px;width:711px;height:17px;background:#F0F0F0"></div>
<div class="a" style="left:0;top:425px;width:695px;height:1px;background:#F8F8F8"></div>
<svg class="a" style="left:5px;top:429px" width="6" height="9" viewBox="0 0 6 9"><path d="M5 1 L1.5 4.5 L5 8" fill="none" stroke="#5A5A5A" stroke-width="2.3"/></svg>
<div class="a" style="left:17px;top:426px;width:17px;height:15px;background:#CDCDCD"></div>
<svg class="a" style="left:684px;top:429px" width="6" height="9" viewBox="0 0 6 9"><path d="M1 1 L4.5 4.5 L1 8" fill="none" stroke="#5A5A5A" stroke-width="2.3"/></svg>
<div class="a" style="left:0;top:442px;width:711px;height:35px;background:#F3F3F8"></div>
<div class="a" style="left:5px;top:450px;width:85px;height:21px;background:#67B079"></div>
<div class="t" style="left:12px;top:453px;color:#F4FFF0;font-size:12px">Grundansicht</div>
<svg class="a" style="left:682px;top:455px" width="24" height="10" viewBox="0 0 24 10"><g fill="none" stroke="#D5D9E6" stroke-width="1"><path d="M7 1 L2 5 L7 9 Z"/><path d="M17.5 1 L22.5 5 L17.5 9 Z"/></g></svg>
</body></html>
